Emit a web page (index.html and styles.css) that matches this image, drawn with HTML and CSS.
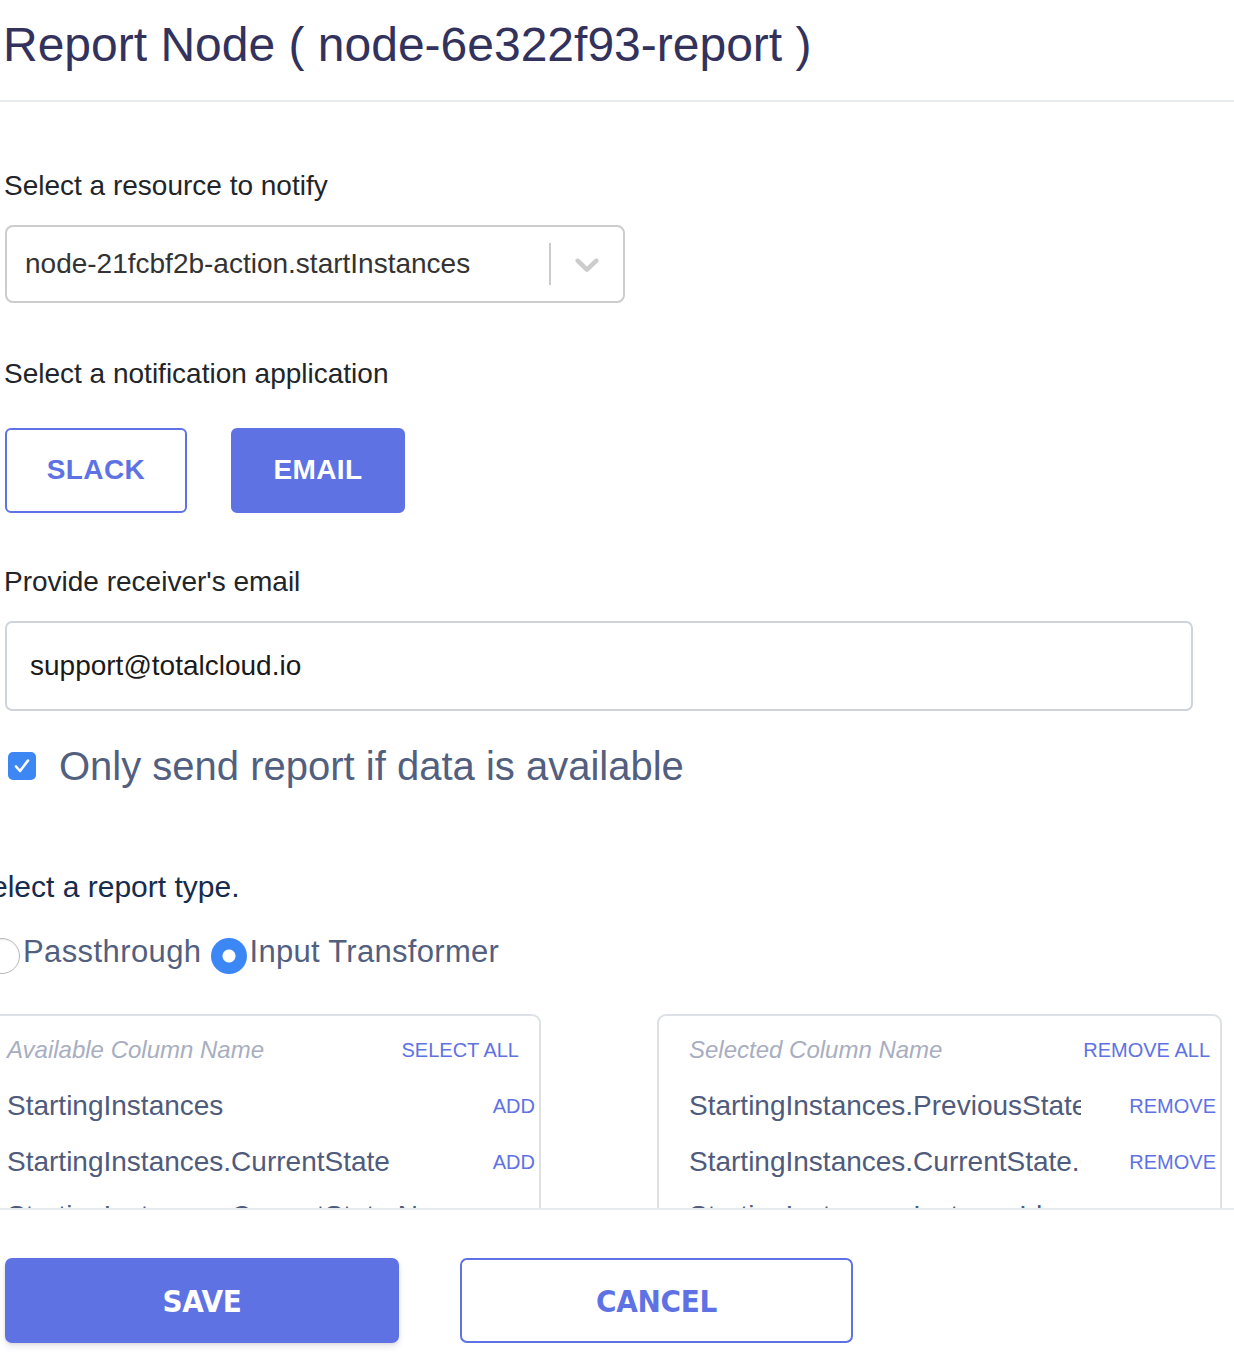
FILE: index.html
```html
<!DOCTYPE html>
<html lang="en">
<head>
<meta charset="utf-8">
<title>Report Node</title>
<link rel="stylesheet" href="styles.css">
</head>
<body>
<div class="page">
  <main class="content">
    <header class="head">
      <h1 class="title">Report Node ( node-6e322f93-report )</h1>
    </header>
    <div class="form">
      <div class="label l-resource">Select a resource to notify</div>
      <div class="select">
        <span class="select-value">node-21fcbf2b-action.startInstances</span>
        <span class="select-sep"></span>
        <span class="select-arrow">
          <svg width="40" height="40" viewBox="0 0 20 20" aria-hidden="true"><path fill="#cccccc" d="M4.516 7.548c0.436-0.446 1.043-0.481 1.576 0l3.908 3.747 3.908-3.747c0.533-0.481 1.141-0.446 1.574 0 0.436 0.445 0.408 1.197 0 1.615-0.406 0.418-4.695 4.502-4.695 4.502-0.217 0.223-0.502 0.335-0.787 0.335s-0.57-0.112-0.789-0.335c0 0-4.287-4.084-4.695-4.502s-0.436-1.17 0-1.615z"/></svg>
        </span>
      </div>

      <div class="label l-app">Select a notification application</div>
      <div class="apps">
        <button class="btn btn-outline btn-slack" type="button">SLACK</button>
        <button class="btn btn-fill btn-email" type="button">EMAIL</button>
      </div>

      <div class="label l-email">Provide receiver's email</div>
      <div class="input">support@totalcloud.io</div>

      <div class="check-row">
        <span class="checkbox">
          <svg width="28" height="28" viewBox="0 0 28 28" aria-hidden="true"><path d="M8 14.5 L12 19 L20 8.5" fill="none" stroke="#ffffff" stroke-width="2.6" stroke-linecap="round" stroke-linejoin="round"/></svg>
        </span>
        <span class="check-label">Only send report if data is available</span>
      </div>

      <section class="report">
        <div class="report-title">Select a report type.</div>
        <div class="radios">
          <span class="radio"></span><span class="radio-label">Passthrough</span>
          <span class="radio radio-on"></span><span class="radio-label">Input Transformer</span>
        </div>
        <div class="lists">
          <div class="list list-left">
            <div class="list-head">
              <span class="list-title">Available Column Name</span>
              <span class="list-all all-left">SELECT ALL</span>
            </div>
            <div class="list-row"><span class="name">StartingInstances</span><span class="act">ADD</span></div>
            <div class="list-row"><span class="name">StartingInstances.CurrentState</span><span class="act">ADD</span></div>
            <div class="list-row row-last"><span class="name">StartingInstances.CurrentState.Name</span><span class="act">ADD</span></div>
          </div>
          <div class="list list-right">
            <div class="list-head">
              <span class="list-title">Selected Column Name</span>
              <span class="list-all all-right">REMOVE ALL</span>
            </div>
            <div class="list-row"><span class="name name-clip">StartingInstances.PreviousState.Name</span><span class="act">REMOVE</span></div>
            <div class="list-row"><span class="name name-clip">StartingInstances.CurrentState.Code</span><span class="act">REMOVE</span></div>
            <div class="list-row row-last"><span class="name name-clip">StartingInstances.InstanceId</span><span class="act">REMOVE</span></div>
          </div>
        </div>
      </section>
    </div>
  </main>
  <footer class="footer">
    <button class="fbtn fbtn-save" type="button">SAVE</button>
    <button class="fbtn fbtn-cancel" type="button">CANCEL</button>
  </footer>
</div>
</body>
</html>
```

FILE: styles.css
```css
* { box-sizing: border-box; }
html, body { margin: 0; padding: 0; background: #ffffff; }
body {
  font-family: "Liberation Sans", Arial, Helvetica, sans-serif;
  width: 1234px;
  overflow: hidden;
}
.page {
  display: flex;
  flex-direction: column;
  height: 1368px;
}
.content {
  height: 1208px;
  overflow: hidden;
  flex-shrink: 0;
}
.head {
  height: 102px;
  padding: 17px 0 0 3px;
  border-bottom: 2px solid #e9ecef;
}
.title {
  margin: 0;
  font-size: 48px;
  line-height: 56px;
  font-weight: 400;
  color: #32325d;
  letter-spacing: 0;
}
.form {
  padding-left: 4px;
  display: flex;
  flex-direction: column;
  align-items: flex-start;
}
.label {
  font-size: 28px;
  line-height: 34px;
  color: #212529;
}
.l-resource { margin-top: 67px; }
.l-app { margin-top: 54px; }
.l-email { margin-top: 52px; }

.select {
  margin-top: 22px;
  margin-left: 1px;
  width: 620px;
  height: 78px;
  border: 2px solid #cccccc;
  border-radius: 8px;
  display: flex;
  align-items: center;
}
.select-value {
  flex: 1;
  padding-left: 18px;
  font-size: 28px;
  color: #333333;
}
.select-sep {
  align-self: stretch;
  width: 2px;
  margin: 16px 0;
  background: #cccccc;
}
.select-arrow {
  display: flex;
  padding: 0 16px;
}

.apps {
  margin-top: 37px;
  margin-left: 1px;
  display: flex;
  gap: 44px;
}
.btn {
  height: 85px;
  border-radius: 6px;
  border: 2px solid #5e72e4;
  font-family: "Liberation Sans", Arial, sans-serif;
  font-weight: 700;
  font-size: 28px;
  letter-spacing: 0.4px;
  padding: 0 0 2px;
  cursor: pointer;
}
.btn-outline { background: #ffffff; color: #5e72e4; }
.btn-fill { background: #5e72e4; color: #ffffff; }
.btn-slack { width: 182px; }
.btn-email { width: 174px; }

.input {
  margin-top: 22px;
  margin-left: 1px;
  width: 1188px;
  height: 90px;
  border: 2px solid #cfd4da;
  border-radius: 7px;
  padding-left: 23px;
  display: flex;
  align-items: center;
  font-size: 28px;
  color: #1a1a1a;
}

.check-row {
  margin-top: 31px;
  display: flex;
  align-items: center;
  height: 48px;
}
.checkbox {
  width: 28px;
  height: 28px;
  margin-left: 4px;
  border-radius: 5px;
  background: #3d87f5;
  display: flex;
}
.check-label {
  margin-left: 23px;
  font-size: 40px;
  line-height: 48px;
  color: #525f7f;
}

.report {
  margin-top: 79px;
  margin-left: -29px;
  display: flex;
  flex-direction: column;
  align-items: flex-start;
}
.report-title {
  margin-left: -4px;
  font-size: 30px;
  line-height: 36px;
  color: #172b4d;
}
.radios {
  margin-top: 27px;
  margin-left: 9px;
  height: 40px;
  display: flex;
  align-items: center;
}
.radio {
  width: 36px;
  height: 36px;
  border-radius: 50%;
  border: 1px solid #b8b8b8;
  background: #ffffff;
  box-shadow: inset 0 1px 2px rgba(0,0,0,0.08);
  margin-top: 8px;
  flex-shrink: 0;
}
.radio-on {
  margin-left: 10px;
  border: none;
  background: radial-gradient(circle at 50% 50%, #ffffff 0 6px, #3b87f6 7px);
  box-shadow: none;
}
.radio-label {
  margin-left: 3px;
  font-size: 31px;
  line-height: 40px;
  color: #525f7f;
  letter-spacing: 0.4px;
}
.radio-on + .radio-label { margin-left: 2px; letter-spacing: 0.3px; }

.lists {
  margin-top: 42px;
  display: flex;
  gap: 116px;
}
.list {
  height: 420px;
  border: 2px solid #dde1e6;
  border-radius: 9px;
  padding: 6px 4px 0 30px;
}
.list-left { width: 566px; }
.list-right { width: 565px; }
.list-head, .list-row {
  height: 56px;
  display: flex;
  align-items: center;
  justify-content: space-between;
}
.row-last { height: 52px; }
.list-title {
  font-size: 24px;
  font-style: italic;
  color: #a8aebf;
}
.list-all {
  font-size: 20px;
  color: #5e72e4;
}
.all-left { margin-right: 16px; }
.all-right { margin-right: 6px; }
.name {
  font-size: 28px;
  color: #4f5b7c;
  white-space: nowrap;
  overflow: hidden;
  text-overflow: clip;
}
.name-clip { width: 392px; flex-shrink: 0; }
.act {
  font-size: 20px;
  color: #5e72e4;
  flex-shrink: 0;
}

.footer {
  flex: 1;
  border-top: 2px solid #e9ecef;
  padding: 48px 0 0 5px;
  display: flex;
  align-items: flex-start;
  gap: 61px;
}
.fbtn {
  height: 85px;
  border-radius: 7px;
  font-family: "Liberation Sans Narrow", "DejaVu Sans Condensed", "Liberation Sans", sans-serif;
  font-stretch: condensed;
  font-weight: 700;
  font-size: 31px;
  letter-spacing: -0.3px;
  padding: 0;
  cursor: pointer;
}
.fbtn-save {
  width: 394px;
  background: #5e72e4;
  color: #ffffff;
  border: 2px solid #5e72e4;
  box-shadow: 0 4px 6px rgba(50,50,93,0.11), 0 1px 3px rgba(0,0,0,0.08);
}
.fbtn-cancel {
  width: 393px;
  background: #ffffff;
  color: #5e72e4;
  border: 2px solid #5e72e4;
}
```
